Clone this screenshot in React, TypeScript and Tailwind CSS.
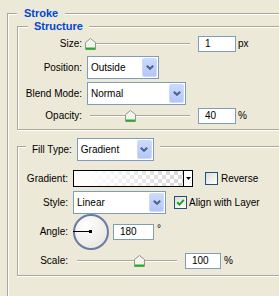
import React from 'react'

// Photoshop "Layer Style › Stroke" panel, XP theme

const BOX = 'border-[#aca899] shadow-[inset_1px_1px_0_#fff,0_1px_0_#fff]'

function Chevron() {
  return (
    <svg width="8" height="5" viewBox="0 0 8 5">
      <polyline points="0.8,0.8 4,3.8 7.2,0.8" fill="none" stroke="#4d6185" strokeWidth="2" />
    </svg>
  )
}

function Dropdown({ value, className }: { value: string; className: string }) {
  return (
    <div className={`flex items-center h-[23px] bg-white border border-[#7f9db9] pl-[3px] pr-px shrink-0 ${className}`}>
      <span>{value}</span>
      <div className="ml-auto w-[15px] h-[19px] rounded-[2px] border border-[#cdd9f9] bg-linear-to-b from-[#cbdafd] to-[#b3c7f7] flex items-center justify-center">
        <Chevron />
      </div>
    </div>
  )
}

function Field({ value, className }: { value: string; className: string }) {
  return (
    <div className={`h-[16px] bg-white border border-[#7f9db9] pl-[6px] flex items-center shrink-0 ${className}`}>
      {value}
    </div>
  )
}

function Thumb() {
  return (
    <svg width="11" height="12" viewBox="0 0 11 12">
      <path d="M5.5 0.5 L10.5 4.5 L10.5 11.5 L0.5 11.5 L0.5 4.5 Z" fill="#f4f4ee" stroke="#8c9a8c" />
      <rect x="1" y="9.5" width="9" height="2" fill="#21b021" />
    </svg>
  )
}

// thumb = left edge of the thumb, in px from the slider's left
function Slider({ thumb, className }: { thumb: number; className: string }) {
  return (
    <div className={`relative h-[12px] shrink-0 ${className}`}>
      <div className="absolute left-[5px] right-[5px] top-[5px] h-[2px] border-t border-[#a9a89a] bg-white" />
      <div className="absolute top-0" style={{ left: thumb }}>
        <Thumb />
      </div>
    </div>
  )
}

function Checkbox({ checked }: { checked?: boolean }) {
  return (
    <div className="w-[13px] h-[13px] shrink-0 border border-[#1c5180] bg-linear-to-br from-[#dcdcd5] to-white flex items-center justify-center">
      {checked && (
        <svg width="9" height="9" viewBox="0 0 9 9">
          <path d="M1.2 4.2 L3.5 6.6 L7.8 1.8" fill="none" stroke="#21a121" strokeWidth="2" />
        </svg>
      )}
    </div>
  )
}

export default function App() {
  return (
    <div className="w-[279px] h-[296px] overflow-hidden bg-[#ece9d8] pl-[7px] pt-[13px] text-[10px] leading-[12px] text-black font-['Liberation_Sans',Arial,sans-serif]">
      {/* ── Stroke group ── */}
      <div className={`relative w-[300px] h-[300px] border-l border-t ${BOX}`}>
        <span className="absolute left-[9px] top-[-8px] bg-[#ece9d8] px-[7px] text-[11px] leading-[15px] font-bold text-[#0046d5]">
          Stroke
        </span>

        {/* Structure */}
        <div className={`relative ml-[9px] mt-[12px] w-[290px] border-l border-t border-b ${BOX} pt-[9px] pb-[5px]`}>
          <span className="absolute left-[10px] top-[-8px] bg-[#ece9d8] px-[6px] text-[11px] leading-[15px] font-bold text-[#0046d5]">
            Structure
          </span>

          <div className="flex items-center h-[16px]">
            <span className="w-[64px] text-right shrink-0">Size:</span>
            <Slider thumb={0} className="ml-[3px] w-[110px]" />
            <Field value="1" className="ml-[3px] w-[38px]" />
            <span className="ml-[2px]">px</span>
          </div>

          <div className="flex items-center h-[23px] mt-[4px]">
            <span className="w-[64px] text-right shrink-0">Position:</span>
            <Dropdown value="Outside" className="ml-[5px] w-[72px]" />
          </div>

          <div className="flex items-center h-[23px] mt-[3px]">
            <span className="w-[64px] text-right shrink-0">Blend Mode:</span>
            <Dropdown value="Normal" className="ml-[5px] w-[99px]" />
          </div>

          <div className="flex items-center h-[16px] mt-[3px]">
            <span className="w-[64px] text-right shrink-0">Opacity:</span>
            <Slider thumb={40} className="ml-[3px] w-[110px]" />
            <Field value="40" className="ml-[3px] w-[38px]" />
            <span className="ml-[2px]">%</span>
          </div>
        </div>

        {/* Fill */}
        <div className={`relative ml-[9px] mt-[16px] w-[290px] border-l border-t border-b ${BOX} pt-[23px] pb-[6px]`}>
          <div className="absolute left-[8px] top-[-9px] bg-[#ece9d8] pl-[6px] pr-[6px] flex items-center">
            <span className="mr-[5px]">Fill Type:</span>
            <Dropdown value="Gradient" className="w-[77px]" />
          </div>

          <div className="flex items-center h-[17px]">
            <span className="w-[50px] text-right shrink-0">Gradient:</span>
            <div className="ml-[5px] w-[120px] h-[17px] shrink-0 border border-black flex">
              <div className="flex-1 bg-[repeating-conic-gradient(#d6d6d6_0_25%,#ffffff_0_50%)] bg-[length:8px_8px]">
                <div className="h-full bg-linear-to-r from-white from-10% to-white/0" />
              </div>
              <div className="w-[9px] border-l border-black bg-white flex items-center justify-center">
                <svg width="5" height="3" viewBox="0 0 5 3">
                  <path d="M0 0 H5 L2.5 3 Z" fill="#000" />
                </svg>
              </div>
            </div>
            <div className="ml-[12px]">
              <Checkbox />
            </div>
            <span className="ml-[3px]">Reverse</span>
          </div>

          <div className="flex items-center h-[23px] mt-[4px]">
            <span className="w-[50px] text-right shrink-0">Style:</span>
            <Dropdown value="Linear" className="ml-[5px] w-[93px]" />
            <div className="ml-[8px]">
              <Checkbox checked />
            </div>
            <span className="ml-[2px]">Align with Layer</span>
          </div>

          <div className="flex items-center h-[36px]">
            <span className="w-[50px] text-right shrink-0">Angle:</span>
            <div className="relative ml-[5px] w-[36px] h-[36px] shrink-0 rounded-full border-2 border-[#6a7aa3] bg-radial-[at_35%_30%] from-white to-[#e2e1da]">
              <div className="absolute left-[-2px] top-[15px] w-[18px] h-px bg-black" />
              <div className="absolute left-[14px] top-[14px] w-[3px] h-[3px] bg-black" />
            </div>
            <Field value="180" className="ml-[4px] w-[41px]" />
            <span className="ml-[3px] -mt-[7px]">°</span>
          </div>

          <div className="flex items-center h-[16px] mt-[3px]">
            <span className="w-[50px] text-right shrink-0">Scale:</span>
            <Slider thumb={62} className="ml-[4px] w-[110px]" />
            <Field value="100" className="ml-[3px] w-[36px]" />
            <span className="ml-[3px]">%</span>
          </div>
        </div>
      </div>
    </div>
  )
}
